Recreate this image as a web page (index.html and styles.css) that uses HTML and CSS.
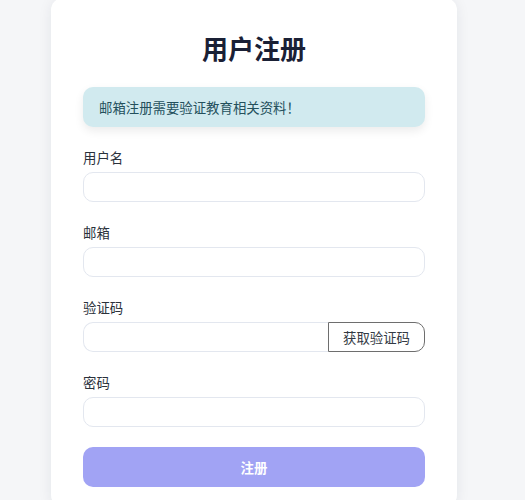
FILE: index.html
```html
<!DOCTYPE html>
<html lang="zh-CN">
<head>
<meta charset="utf-8">
<title>用户注册</title>
<link rel="stylesheet" href="styles.css">
</head>
<body>
<div class="page">
  <div class="card">
    <h1 class="title">用户注册</h1>
    <div class="alert">邮箱注册需要验证教育相关资料！</div>
    <form class="form">
      <div class="field">
        <label class="label">用户名</label>
        <input class="input" type="text">
      </div>
      <div class="field">
        <label class="label">邮箱</label>
        <input class="input" type="email">
      </div>
      <div class="field">
        <label class="label">验证码</label>
        <div class="code-row">
          <input class="input input-code" type="text">
          <button type="button" class="code-btn">获取验证码</button>
        </div>
      </div>
      <div class="field">
        <label class="label">密码</label>
        <input class="input" type="password">
      </div>
      <button type="button" class="submit">注册</button>
    </form>
  </div>
</div>
</body>
</html>
```

FILE: styles.css
```css
html, body {
  margin: 0;
  padding: 0;
}
body {
  background: #f5f6f8;
  font-family: "Noto Sans CJK SC", sans-serif;
  height: 500px;
  overflow: hidden;
}
.page {
  width: 508px;
  display: flex;
  justify-content: center;
}
.card {
  width: 342px;
  margin-top: -2px;
  padding: 32px 32px 20px;
  background: #ffffff;
  border-radius: 12px;
  box-shadow: 0 2px 14px rgba(30, 40, 60, 0.08);
}
.title {
  margin: 0;
  text-align: center;
  font-size: 26px;
  line-height: 36px;
  font-weight: 700;
  color: #1a2035;
}
.alert {
  margin-top: 21px;
  padding: 10px 16px;
  line-height: 20px;
  font-size: 13.4px;
  color: #24505c;
  background: #d1eaef;
  border-radius: 10px;
  box-shadow: 0 4px 10px rgba(0, 0, 0, 0.08);
  text-spacing-trim: space-all;
}
.form {
  display: flex;
  flex-direction: column;
  gap: 20px;
  margin-top: 20px;
}
.field {
  display: flex;
  flex-direction: column;
  gap: 5px;
}
.label {
  font-size: 13.4px;
  line-height: 20px;
  color: #2a313b;
}
.input {
  box-sizing: border-box;
  height: 30px;
  width: 100%;
  margin: 0;
  padding: 0 10px;
  border: 1px solid #e3e7ef;
  border-radius: 10px;
  background: #ffffff;
  font: inherit;
  outline: none;
}
.code-row {
  display: flex;
}
.input-code {
  flex: 1;
  width: auto;
  min-width: 0;
  border-radius: 10px 0 0 10px;
  border-right: none;
}
.code-btn {
  box-sizing: border-box;
  width: 97px;
  height: 30px;
  margin: 0;
  padding: 0;
  border: 1px solid #6e6e6e;
  border-radius: 0 10px 10px 0;
  background: #ffffff;
  font-family: inherit;
  font-size: 13.4px;
  color: #333a44;
}
.submit {
  box-sizing: border-box;
  height: 40px;
  margin: 0;
  border: none;
  border-radius: 10px;
  background: #a1a3f4;
  color: #ffffff;
  font-family: inherit;
  font-size: 13.4px;
  font-weight: 700;
}
```
